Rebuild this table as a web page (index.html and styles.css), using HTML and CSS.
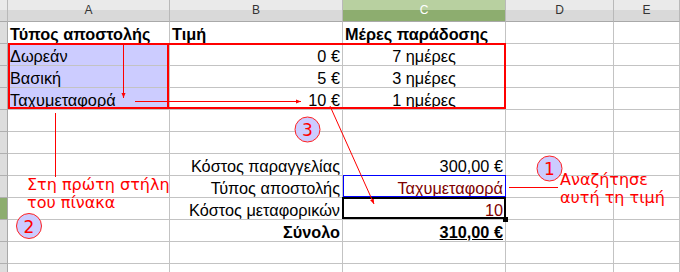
FILE: index.html
```html
<!DOCTYPE html>
<html lang="el">
<head>
<meta charset="utf-8">
<link rel="stylesheet" href="styles.css">
</head>
<body>
<div class="sheet">
  <div class="hd corner"></div>
  <div class="hd">A</div>
  <div class="hd">B</div>
  <div class="hd act">C</div>
  <div class="hd">D</div>
  <div class="hd">E</div>

  <div class="rh"></div>
  <div class="cell l b">Τύπος αποστολής</div>
  <div class="cell l b">Τιμή</div>
  <div class="cell l b">Μέρες παράδοσης</div>
  <div class="cell"></div><div class="cell"></div>

  <div class="rh"></div>
  <div class="cell l sel">Δωρεάν</div>
  <div class="cell r">0 €</div>
  <div class="cell c">7 ημέρες</div>
  <div class="cell"></div><div class="cell"></div>

  <div class="rh"></div>
  <div class="cell l sel">Βασική</div>
  <div class="cell r">5 €</div>
  <div class="cell c">3 ημέρες</div>
  <div class="cell"></div><div class="cell"></div>

  <div class="rh"></div>
  <div class="cell l sel">Ταχυμεταφορά</div>
  <div class="cell r">10 €</div>
  <div class="cell c">1 ημέρες</div>
  <div class="cell"></div><div class="cell"></div>

  <div class="rh"></div>
  <div class="cell"></div><div class="cell"></div><div class="cell"></div><div class="cell"></div><div class="cell"></div>

  <div class="rh"></div>
  <div class="cell"></div><div class="cell"></div><div class="cell"></div><div class="cell"></div><div class="cell"></div>

  <div class="rh"></div>
  <div class="cell"></div>
  <div class="cell r">Κόστος παραγγελίας</div>
  <div class="cell r">300,00 €</div>
  <div class="cell"></div><div class="cell"></div>

  <div class="rh"></div>
  <div class="cell"></div>
  <div class="cell r">Τύπος αποστολής</div>
  <div class="cell r dark">Ταχυμεταφορά</div>
  <div class="cell"></div><div class="cell"></div>

  <div class="rh act"></div>
  <div class="cell"></div>
  <div class="cell r">Κόστος μεταφορικών</div>
  <div class="cell r dark">10</div>
  <div class="cell"></div><div class="cell"></div>

  <div class="rh"></div>
  <div class="cell"></div>
  <div class="cell r b">Σύνολο</div>
  <div class="cell r b"><span class="u">310,00 €</span></div>
  <div class="cell"></div><div class="cell"></div>

  <div class="rh"></div>
  <div class="cell"></div><div class="cell"></div><div class="cell"></div><div class="cell"></div><div class="cell"></div>

  <div class="rh"></div>
  <div class="cell"></div><div class="cell"></div><div class="cell"></div><div class="cell"></div><div class="cell"></div>
</div>

<svg class="overlay" width="680" height="272" viewBox="0 0 680 272" xmlns="http://www.w3.org/2000/svg">
  <defs>
    <marker id="ah" viewBox="0 0 10 10" refX="10" refY="5" markerWidth="5" markerHeight="5" orient="auto" markerUnits="userSpaceOnUse">
      <path d="M0,1 L10,5 L0,9 z" fill="#ff0000"/>
    </marker>
  </defs>
  <rect x="9" y="44" width="496" height="64" fill="none" stroke="#ff0000" stroke-width="2"/>
  <line x1="168" y1="44" x2="168" y2="108" stroke="#ff0000" stroke-width="2"/>
  <rect x="343.5" y="175.5" width="162" height="21" fill="none" stroke="#0000ff" stroke-width="1"/>
  <rect x="343" y="198" width="162" height="20" fill="none" stroke="#000" stroke-width="2"/>
  <rect x="503" y="217" width="5" height="5" fill="#000"/>

  <line x1="123.5" y1="44" x2="123.5" y2="98" stroke="#ff0000" stroke-width="1" marker-end="url(#ah)"/>
  <line x1="135" y1="101.5" x2="301" y2="101.5" stroke="#ff0000" stroke-width="1" marker-end="url(#ah)"/>
  <line x1="330" y1="106" x2="374" y2="204" stroke="#ff0000" stroke-width="1" marker-end="url(#ah)"/>
  <line x1="55.5" y1="113" x2="55.5" y2="177" stroke="#ff0000" stroke-width="1"/>
  <line x1="509" y1="187.5" x2="558" y2="187.5" stroke="#ff0000" stroke-width="1"/>

  <circle cx="549.5" cy="168.5" r="12.5" fill="#ccccff" stroke="#ff2020" stroke-width="1"/>
  <circle cx="29" cy="226" r="12.5" fill="#ccccff" stroke="#ff2020" stroke-width="1"/>
  <circle cx="307.5" cy="129.5" r="12.5" fill="#ccccff" stroke="#ff2020" stroke-width="1"/>
  <text x="549.5" y="175" class="num">1</text>
  <text x="29" y="232.5" class="num">2</text>
  <text x="307.5" y="136" class="num">3</text>
</svg>

<div class="note note-left">Στη πρώτη στήλη<br>του πίνακα</div>
<div class="note note-right">Αναζήτησε<br>αυτή τη τιμή</div>
</body>
</html>
```
FILE: styles.css
```css
html, body {
  margin: 0;
  padding: 0;
  width: 680px;
  height: 272px;
  overflow: hidden;
  background: #fff;
}
body {
  position: relative;
  font-family: "Liberation Sans", Arial, sans-serif;
}
.sheet {
  display: grid;
  grid-template-columns: 8px 162px 173px 163px 108px 66px;
  grid-auto-rows: 22px;
  width: 680px;
  height: 272px;
  overflow: hidden;
}
.hd {
  box-sizing: border-box;
  background: linear-gradient(#eaeaea 0, #eaeaea 50%, #d9d9d9 50%, #d9d9d9 100%);
  border-right: 1px solid #b9b9b9;
  border-bottom: 1px solid #a9a9a9;
  color: #333;
  font-size: 12px;
  line-height: 21px;
  text-align: center;
}
.hd.act {
  background: linear-gradient(#b8d0a0 0, #b8d0a0 50%, #8dad6f 50%, #8dad6f 100%);
  color: #fff;
}
.rh {
  box-sizing: border-box;
  background: #dddddd;
  border-right: 1px solid #a9a9a9;
  border-bottom: 1px solid #b0b0b0;
}
.rh.act { background: #8dad6f; }
.cell {
  box-sizing: border-box;
  border-right: 1px solid #c3c3c3;
  border-bottom: 1px solid #c3c3c3;
  font-size: 16.3px;
  line-height: 25px;
  white-space: nowrap;
  overflow: visible;
  color: #000;
}
.cell.l { text-align: left; padding-left: 2px; }
.cell.r { text-align: right; padding-right: 2px; }
.cell.c { text-align: center; }
.cell.b { font-weight: bold; }
.cell.sel { background: #ccccff; }
.cell.dark { color: #800000; }
.u { text-decoration: underline; }
.overlay {
  position: absolute;
  left: 0;
  top: 0;
  pointer-events: none;
}
.num {
  font-family: "DejaVu Sans", sans-serif;
  font-size: 17px;
  fill: #ff0000;
  text-anchor: middle;
}
.note {
  position: absolute;
  font-family: "DejaVu Sans", sans-serif;
  font-size: 16px;
  line-height: 18px;
  color: #ff0000;
  white-space: nowrap;
}
.note-left { left: 27px; top: 176px; }
.note-right { left: 560px; top: 171px; }
```
